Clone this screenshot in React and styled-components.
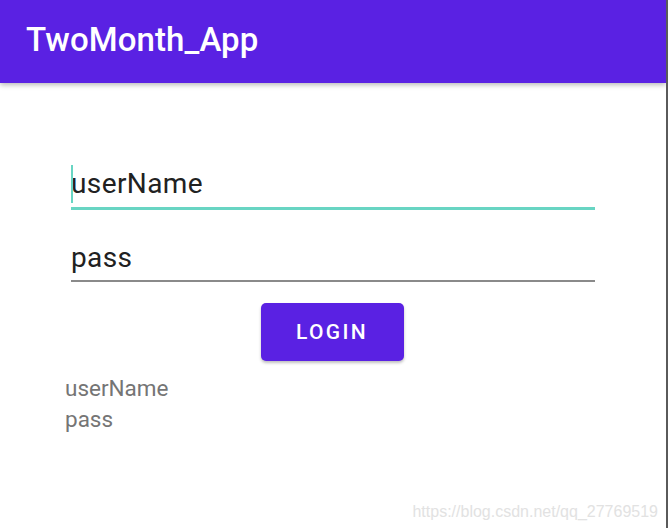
import React from 'react'
import styled, { createGlobalStyle } from 'styled-components'

const Global = createGlobalStyle`
    html, body {
        margin: 0;
        padding: 0;
        background: #ffffff;
    }
    body {
        font-family: Roboto, "Noto Sans", sans-serif;
    }
`;

const Screen = styled.div`
    position: relative;
    width: 666px;
    height: 528px;
    border-right: 2px solid #5a5a5a;
    background: #ffffff;
    overflow: hidden;
    display: flex;
    flex-direction: column;
`;

const AppBar = styled.header`
    height: 83px;
    flex-shrink: 0;
    background: #5a21e3;
    box-shadow: 0 2px 5px rgba(0, 0, 0, 0.28);
    display: flex;
    align-items: center;
    padding: 0 0 4px 26px;
    box-sizing: border-box;
    z-index: 1;
`;

const Title = styled.h1`
    margin: 0;
    font-family: Roboto, sans-serif;
    font-size: 33px;
    font-weight: 500;
    color: #ffffff;
    letter-spacing: 0.1px;
`;

const Form = styled.div`
    display: flex;
    flex-direction: column;
    padding: 80px 71px 0 71px;
`;

const Field = styled.div`
    position: relative;
    height: ${p => p.$height}px;
    width: 524px;
    border-bottom: ${p => p.$focused ? '3px solid #68d5c3' : '2px solid #8a8a8a'};
    display: flex;
    align-items: flex-end;
    box-sizing: border-box;
    margin-bottom: ${p => p.$gap || 0}px;
`;

const FieldText = styled.span`
    font-family: Roboto, sans-serif;
    font-size: 28px;
    letter-spacing: 0.4px;
    color: #212121;
    line-height: 1;
    padding-bottom: ${p => p.$pad}px;
`;

const Cursor = styled.span`
    position: absolute;
    left: 0;
    top: 2px;
    width: 2px;
    height: 38px;
    background: #68d5c3;
`;

const ButtonRow = styled.div`
    display: flex;
    justify-content: center;
    padding: 21px 0 0 0;
    margin-left: -2px;
`;

const LoginButton = styled.button`
    width: 143px;
    height: 58px;
    border: none;
    border-radius: 5px;
    background: #5a21e3;
    color: #ffffff;
    font-family: Roboto, sans-serif;
    font-size: 21px;
    font-weight: 500;
    letter-spacing: 2.3px;
    box-shadow: 0 2px 3px rgba(0, 0, 0, 0.25);
    cursor: pointer;
`;

const Output = styled.div`
    display: flex;
    flex-direction: column;
    padding: 12px 0 0 65px;
`;

const OutputLine = styled.span`
    font-family: Roboto, sans-serif;
    font-size: 22.5px;
    line-height: 31px;
    color: #757575;
`;

const Watermark = styled.span`
    position: absolute;
    right: 8px;
    bottom: 7px;
    font-family: "Liberation Sans", Arial, sans-serif;
    font-size: 16px;
    color: #e2e2e2;
`;

const App = () => {
    return (
        <Screen>
            <Global />
            <AppBar>
                <Title>TwoMonth_App</Title>
            </AppBar>
            <Form>
                <Field $height={47} $focused $gap={23}>
                    <Cursor />
                    <FieldText $pad={9}>userName</FieldText>
                </Field>
                <Field $height={49}>
                    <FieldText $pad={8}>pass</FieldText>
                </Field>
            </Form>
            <ButtonRow>
                <LoginButton>LOGIN</LoginButton>
            </ButtonRow>
            <Output>
                <OutputLine>userName</OutputLine>
                <OutputLine>pass</OutputLine>
            </Output>
            <Watermark>https://blog.csdn.net/qq_27769519</Watermark>
        </Screen>
    )
}

export default App
